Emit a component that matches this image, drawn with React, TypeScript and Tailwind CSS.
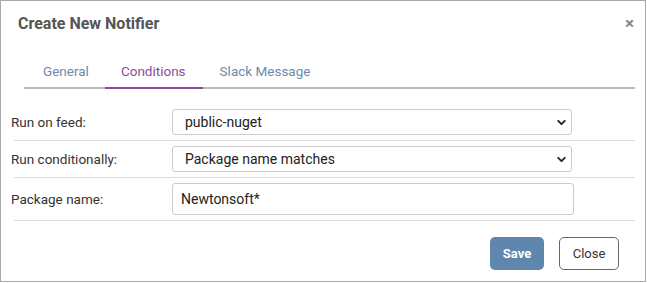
import { ChevronDown } from "lucide-react";

const rows = [
    { label: "Run on feed:", value: "public-nuget", kind: "select" },
    { label: "Run conditionally:", value: "Package name matches", kind: "select" },
    { label: "Package name:", value: "Newtonsoft*", kind: "input" },
];

export default function App() {
    return (
        <div
            className="w-[646px] h-[282px] border border-[#a9a9a9] bg-white text-[#333] flex flex-col"
            style={{ fontFamily: "Roboto, 'Liberation Sans', sans-serif" }}
        >
            {/* Header */}
            <div className="flex items-center justify-between pl-[17px] pr-[11px] pt-[12px] h-[33px]">
                <h2 className="text-[16px] font-bold text-[#555]">Create New Notifier</h2>
                <span className="text-[#888] text-[17px] font-bold leading-none">×</span>
            </div>

            {/* Tabs */}
            <div className="ml-[23px] w-[611px] mt-[27px] flex border-b-2 border-[#bbb] h-[28px] text-[13.5px]">
                <div className="pl-[19px] pr-[16px] text-[#6a8bad]">General</div>
                <div className="pl-[16px] pr-[17px] text-[#8e4a9a] border-b-2 border-[#8e4a9a] -mb-[2px]">Conditions</div>
                <div className="px-[17px] text-[#6a8bad]">Slack Message</div>
            </div>

            {/* Rows */}
            <div className="mt-[20px] flex flex-col">
                {rows.map((r) => (
                    <div key={r.label} className="flex flex-col">
                        <div className="flex items-center">
                            <div className="w-[171px] pl-[10px] text-[13.5px] text-[#333]">{r.label}</div>
                            {r.kind === "select" ? (
                                <div className="w-[400px] h-[26px] border border-[#ccc] rounded-[3px] flex items-center justify-between pl-[12px] pr-[3px] text-[14px] text-[#222]">
                                    <span>{r.value}</span>
                                    <ChevronDown className="w-[13px] h-[13px] text-[#222]" strokeWidth={3.5} />
                                </div>
                            ) : (
                                <div className="w-[402px] h-[32px] border border-[#ccc] rounded-[3px] flex items-center pl-[8px] text-[14px] text-[#222]">
                                    {r.value}
                                </div>
                            )}
                        </div>
                        <div className="ml-[13px] w-[621px] h-px bg-[#ddd] my-[5px]" />
                    </div>
                ))}
            </div>

            {/* Footer */}
            <div className="flex justify-end gap-[15px] pr-[26px] mt-[11px]">
                <button className="w-[54px] h-[33px] rounded-[5px] bg-[#5f87ad] text-white text-[13px] font-bold">
                    Save
                </button>
                <button className="w-[60px] h-[33px] rounded-[5px] border border-[#666] bg-white text-[#333] text-[13px]">
                    Close
                </button>
            </div>
        </div>
    );
}
